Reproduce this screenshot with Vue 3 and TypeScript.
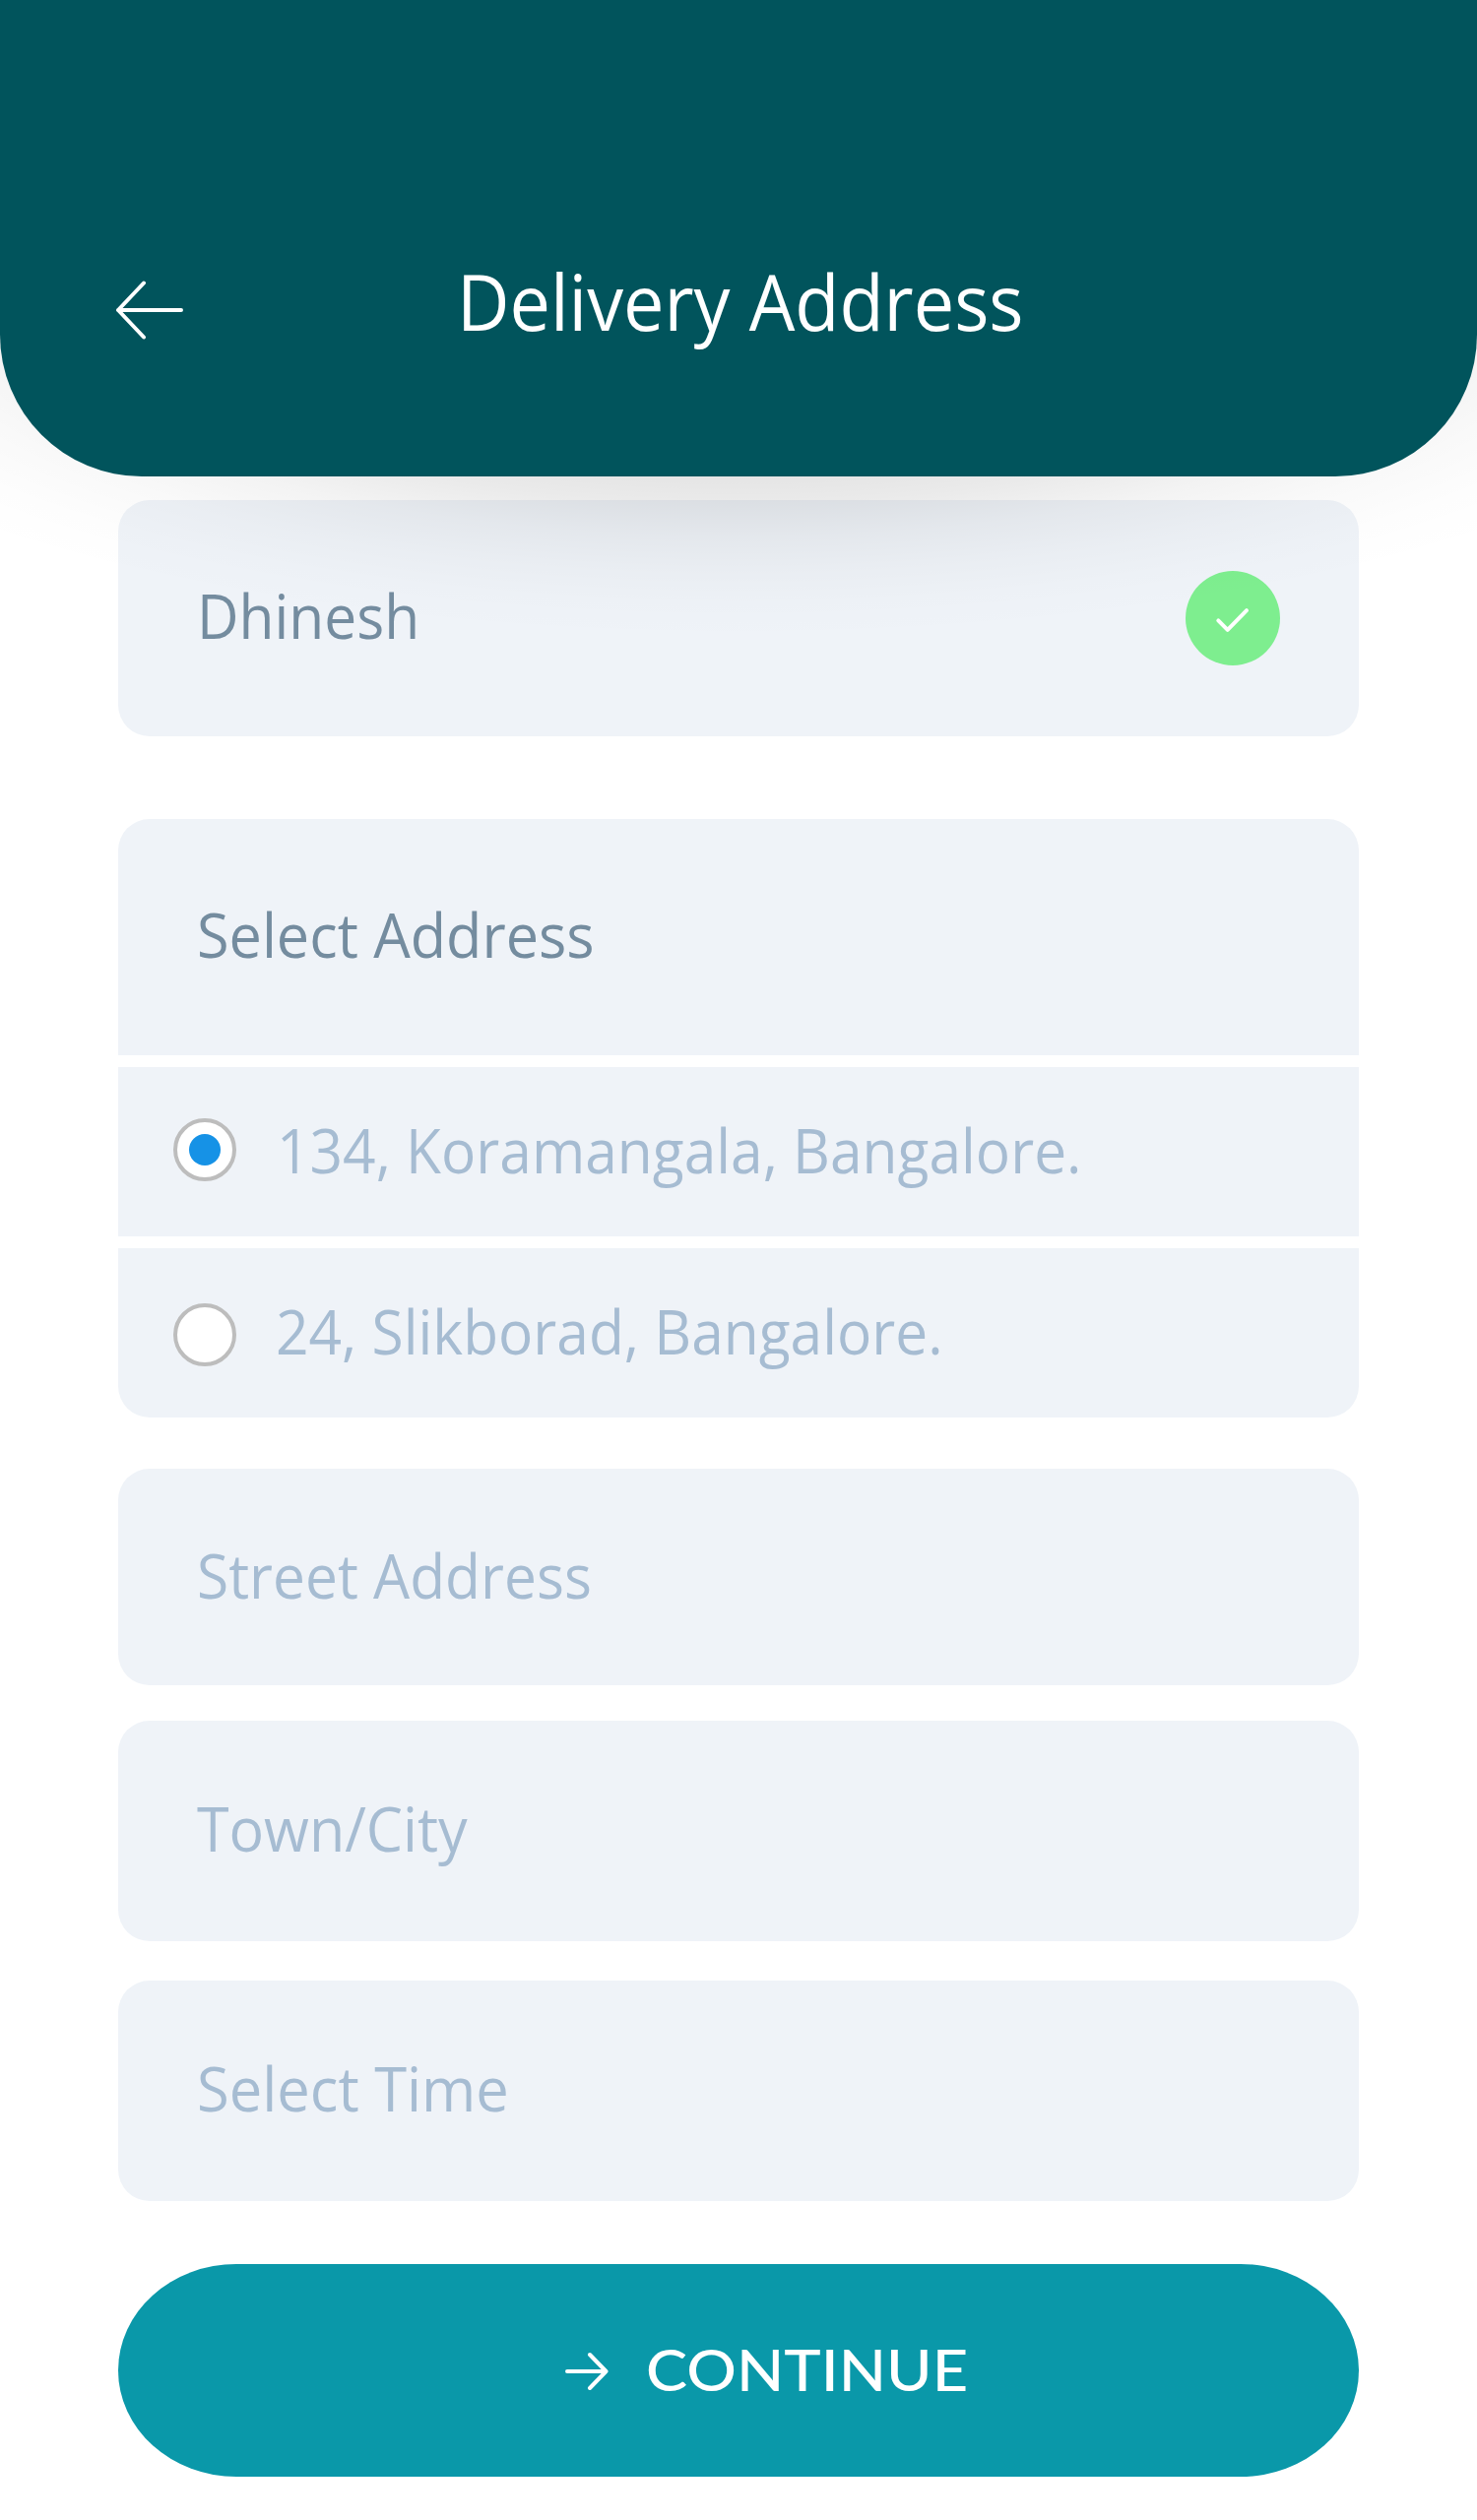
<script setup lang="ts">
import { ref } from 'vue'

interface SavedAddress {
  id: number
  label: string
}

const addresses: SavedAddress[] = [
  { id: 1, label: '134, Koramangala, Bangalore.' },
  { id: 2, label: '24, Slikborad, Bangalore.' },
]
const selected = ref<number>(1)
</script>

<template>
  <main class="screen">
    <header class="header">
      <svg class="back" width="68" height="60" viewBox="0 0 68 60">
        <path d="M66 30H2M28 2.5L2 30L28 57.5" />
      </svg>
      <h1 class="title"><span>Delivery Address</span></h1>
    </header>

    <section class="form">
      <div class="field name">
        <span class="label strong">Dhinesh</span>
        <svg class="check" width="96" height="96" viewBox="0 0 96 96">
          <circle cx="48" cy="48" r="48" />
          <path d="M33.3 50.3L42.7 59.8L62 40.2" />
        </svg>
      </div>

      <div class="group">
        <div class="field head"><span class="label strong">Select Address</span></div>
        <div
          v-for="a in addresses"
          :key="a.id"
          class="field option"
          :class="'option-' + a.id"
          @click="selected = a.id"
        >
          <span class="radio"><i v-if="selected === a.id" class="dot"></i></span>
          <span class="label">{{ a.label }}</span>
        </div>
      </div>

      <div class="field street"><span class="label">Street Address</span></div>
      <div class="field town"><span class="label">Town/City</span></div>
      <div class="field time"><span class="label">Select Time</span></div>

      <button class="continue" type="button">
        <svg width="44" height="40" viewBox="0 0 44 40">
          <path d="M2 20H41.5M25 3L41.5 20L25 37" />
        </svg>
        <span>CONTINUE</span>
      </button>
    </section>
  </main>
</template>

<style>
body {
  margin: 0;
  background: #fff;
}
</style>

<style scoped>
.screen {
  position: relative;
  width: 1500px;
  height: 2560px;
  overflow: hidden;
  background: #fff;
  font-family: 'Open Sans', 'Noto Sans', sans-serif;
}
/* soft elliptical shadow that the header casts over the first field */
.screen::before {
  content: '';
  position: absolute;
  z-index: 1;
  top: 0;
  left: 0;
  width: 100%;
  height: 660px;
  pointer-events: none;
  background: radial-gradient(
    1071px 350px at 750px 300px,
    rgba(0, 0, 0, 0.11) 50%,
    rgba(0, 0, 0, 0.082) 60%,
    rgba(0, 0, 0, 0.048) 70%,
    rgba(0, 0, 0, 0.024) 80%,
    rgba(0, 0, 0, 0.008) 90%,
    rgba(0, 0, 0, 0) 100%
  );
}
.header {
  position: relative;
  z-index: 2;
  box-sizing: border-box;
  display: flex;
  align-items: flex-start;
  height: 484px;
  padding: 252px 0 0 118px;
  border-radius: 0 0 144px 144px;
  background: #01545c;
}
.back {
  flex: none;
  margin-top: 33px;
}
svg path {
  fill: none;
  stroke: #fff;
  stroke-width: 4;
  stroke-linecap: round;
  stroke-linejoin: round;
}
.title {
  margin: 0 0 0 278px;
  font-size: 78.4px;
  font-weight: 400;
  line-height: 108px;
  color: #fff;
  white-space: nowrap;
}
.title span {
  display: block;
  transform: scaleX(0.941);
  transform-origin: left;
}
.form {
  display: flex;
  flex-direction: column;
  padding: 24px 120px 0;
}
.field {
  --fit: 0.936;
  box-sizing: border-box;
  display: flex;
  align-items: center;
  padding-left: 80px;
  background: #eff3f8;
  border-radius: 32px;
}
.label {
  margin-bottom: 6px;
  font-size: 62.7px;
  line-height: 84px;
  color: #a6bcd2;
  white-space: nowrap;
  transform: scaleX(var(--fit));
  transform-origin: left;
}
.strong {
  color: #748c9f;
}
.name {
  height: 240px;
  justify-content: space-between;
  padding-right: 80px;
}
.check circle {
  fill: #7eee8f;
}
.group {
  display: flex;
  flex-direction: column;
  gap: 12px;
  margin: 84px 0 52px;
}
.head {
  --fit: 0.947;
  height: 240px;
  border-radius: 32px 32px 0 0;
}
.option {
  height: 172px;
  padding-left: 56px;
  gap: 41px;
  border-radius: 0;
}
.option .label {
  margin-bottom: 4px;
}
.option:last-child {
  gap: 40px;
  border-radius: 0 0 32px 32px;
}
.radio {
  box-sizing: border-box;
  display: flex;
  align-items: center;
  justify-content: center;
  width: 64px;
  height: 64px;
  border: 4px solid #bdbdbd;
  border-radius: 50%;
  background: #fff;
}
.option-1 .radio {
  margin-bottom: 4px;
}
.option-2 .radio {
  margin-top: 4px;
}
.dot {
  width: 32px;
  height: 32px;
  border-radius: 50%;
  background: #1692e6;
}
.street {
  height: 220px;
}
.street .label {
  margin-bottom: 4px;
}
.town {
  --fit: 0.943;
  height: 224px;
  margin-top: 36px;
}
.time {
  --fit: 0.952;
  height: 224px;
  margin-top: 40px;
}
.continue {
  box-sizing: border-box;
  display: flex;
  align-items: center;
  height: 216px;
  margin-top: 64px;
  padding: 0 0 0 454px;
  border: 0;
  border-radius: 120px / 108px;
  background: #0a98a9;
  color: #fff;
}
.continue svg {
  flex: none;
  margin-top: 2px;
}
.continue span {
  margin: 0 0 5px 38px;
  font: 500 58.5px / 70px Lato, 'Open Sans', sans-serif;
  transform: scaleX(1.08);
  transform-origin: left;
}
</style>
